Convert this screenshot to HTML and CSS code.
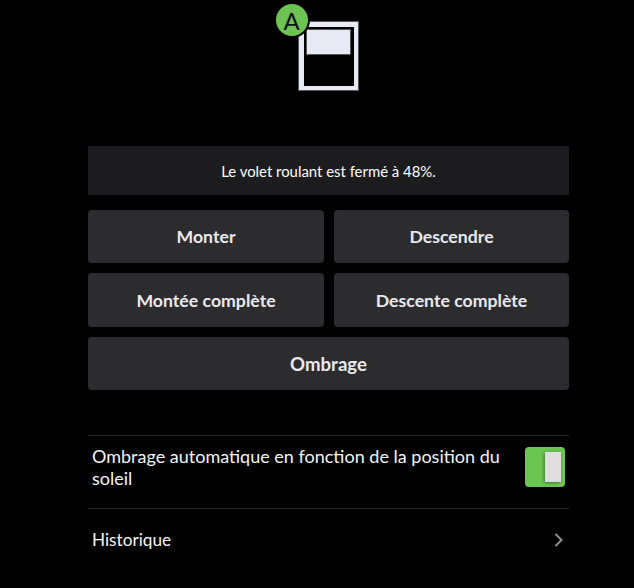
FILE: index.html
```html
<!DOCTYPE html>
<html lang="fr">
<head>
    <title>Volet roulant</title>
    <link rel="stylesheet" href="styles.css">
</head>
<body>
    <div class="device">
        <div class="shutter">
            <div class="shutter-blind"></div>
            <div class="badge">A</div>
        </div>
    </div>

    <div class="container">
        <div class="status">Le volet roulant est fermé à 48%.</div>

        <div class="actions">
            <button>Monter</button>
            <button>Descendre</button>
            <button>Montée complète</button>
            <button>Descente complète</button>
            <button class="wide">Ombrage</button>
        </div>

        <div class="settings">
            <div class="row row-toggle">
                <span class="row-label">Ombrage automatique en fonction de la position du soleil</span>
                <div class="toggle"><div class="toggle-knob"></div></div>
            </div>
            <div class="row row-link">
                <span class="row-label">Historique</span>
                <svg class="chevron" width="10" height="14" viewBox="0 0 10 14">
                    <path d="M1.5 1 L7.5 7 L1.5 13" fill="none" stroke="#8e8e93" stroke-width="2"/>
                </svg>
            </div>
        </div>
    </div>
</body>
</html>
```

FILE: styles.css
```css
html, body { margin: 0; padding: 0; }

body {
    background: #000000;
    color: #ffffff;
    font-family: "Lato", "Noto Sans", sans-serif;
    height: 588px;
    overflow: hidden;
}

.device { display: flex; justify-content: center; padding: 21px 0 0 22px; height: 146px; box-sizing: border-box; }

.shutter {
    position: relative;
    width: 61px;
    height: 70px;
    box-sizing: border-box;
    border: solid #e9e9f5;
    border-width: 6px 5px 5px 6px;
    outline: 1px solid #55555c;
    outline-offset: -1px;
}

.shutter-blind { height: 26px; margin: 2px 0 0 2px; width: 45px; background: #e9e9f5; border: 1px solid #55555c; box-sizing: border-box; }

.badge {
    position: absolute;
    left: -30px;
    top: -25px;
    width: 32px;
    height: 32px;
    border-radius: 50%;
    background: #6cc452;
    border: 2px solid #000000;
    color: #111111;
    font-size: 24px;
    line-height: 33px;
    text-align: center;
}

.container { width: 481px; margin-left: 88px; }

.status {
    height: 49px;
    line-height: 50px;
    background: #1c1c1e;
    text-align: center;
    font-size: 14.9px;
    margin-bottom: 15px;
}

.actions { display: grid; grid-template-columns: 236px 235px; grid-template-rows: 53px 54px 53px; gap: 10px; }

button {
    background: #2c2c2e;
    color: #e9e9f0;
    border: none;
    border-radius: 4px;
    font-family: inherit;
    font-size: 17.7px;
    font-weight: 700;
    padding: 0;
}

.wide { grid-column: 1 / 3; font-size: 18.6px; }

.settings { margin-top: 45px; }

.row { display: flex; align-items: center; justify-content: space-between; border-top: 1px solid #2a2a2c; box-sizing: border-box; padding: 0 4px; }
.row-toggle { height: 73px; padding-bottom: 10px; }
.row-link { height: 62px; padding-right: 5px; }
.row-label { font-size: 18px; line-height: 22px; color: #f4f4f6; }
.row-link .row-label { font-size: 17.2px; }
.row-toggle .row-label { width: 420px; }

.toggle { width: 40px; height: 40px; background: #6cc452; border-radius: 4px; display: flex; justify-content: flex-end; align-items: center; padding-right: 4px; box-sizing: border-box; }
.toggle-knob { width: 16px; height: 30px; background: #dedede; box-shadow: -1px 1px 3px rgba(0,0,0,0.4); }
```
